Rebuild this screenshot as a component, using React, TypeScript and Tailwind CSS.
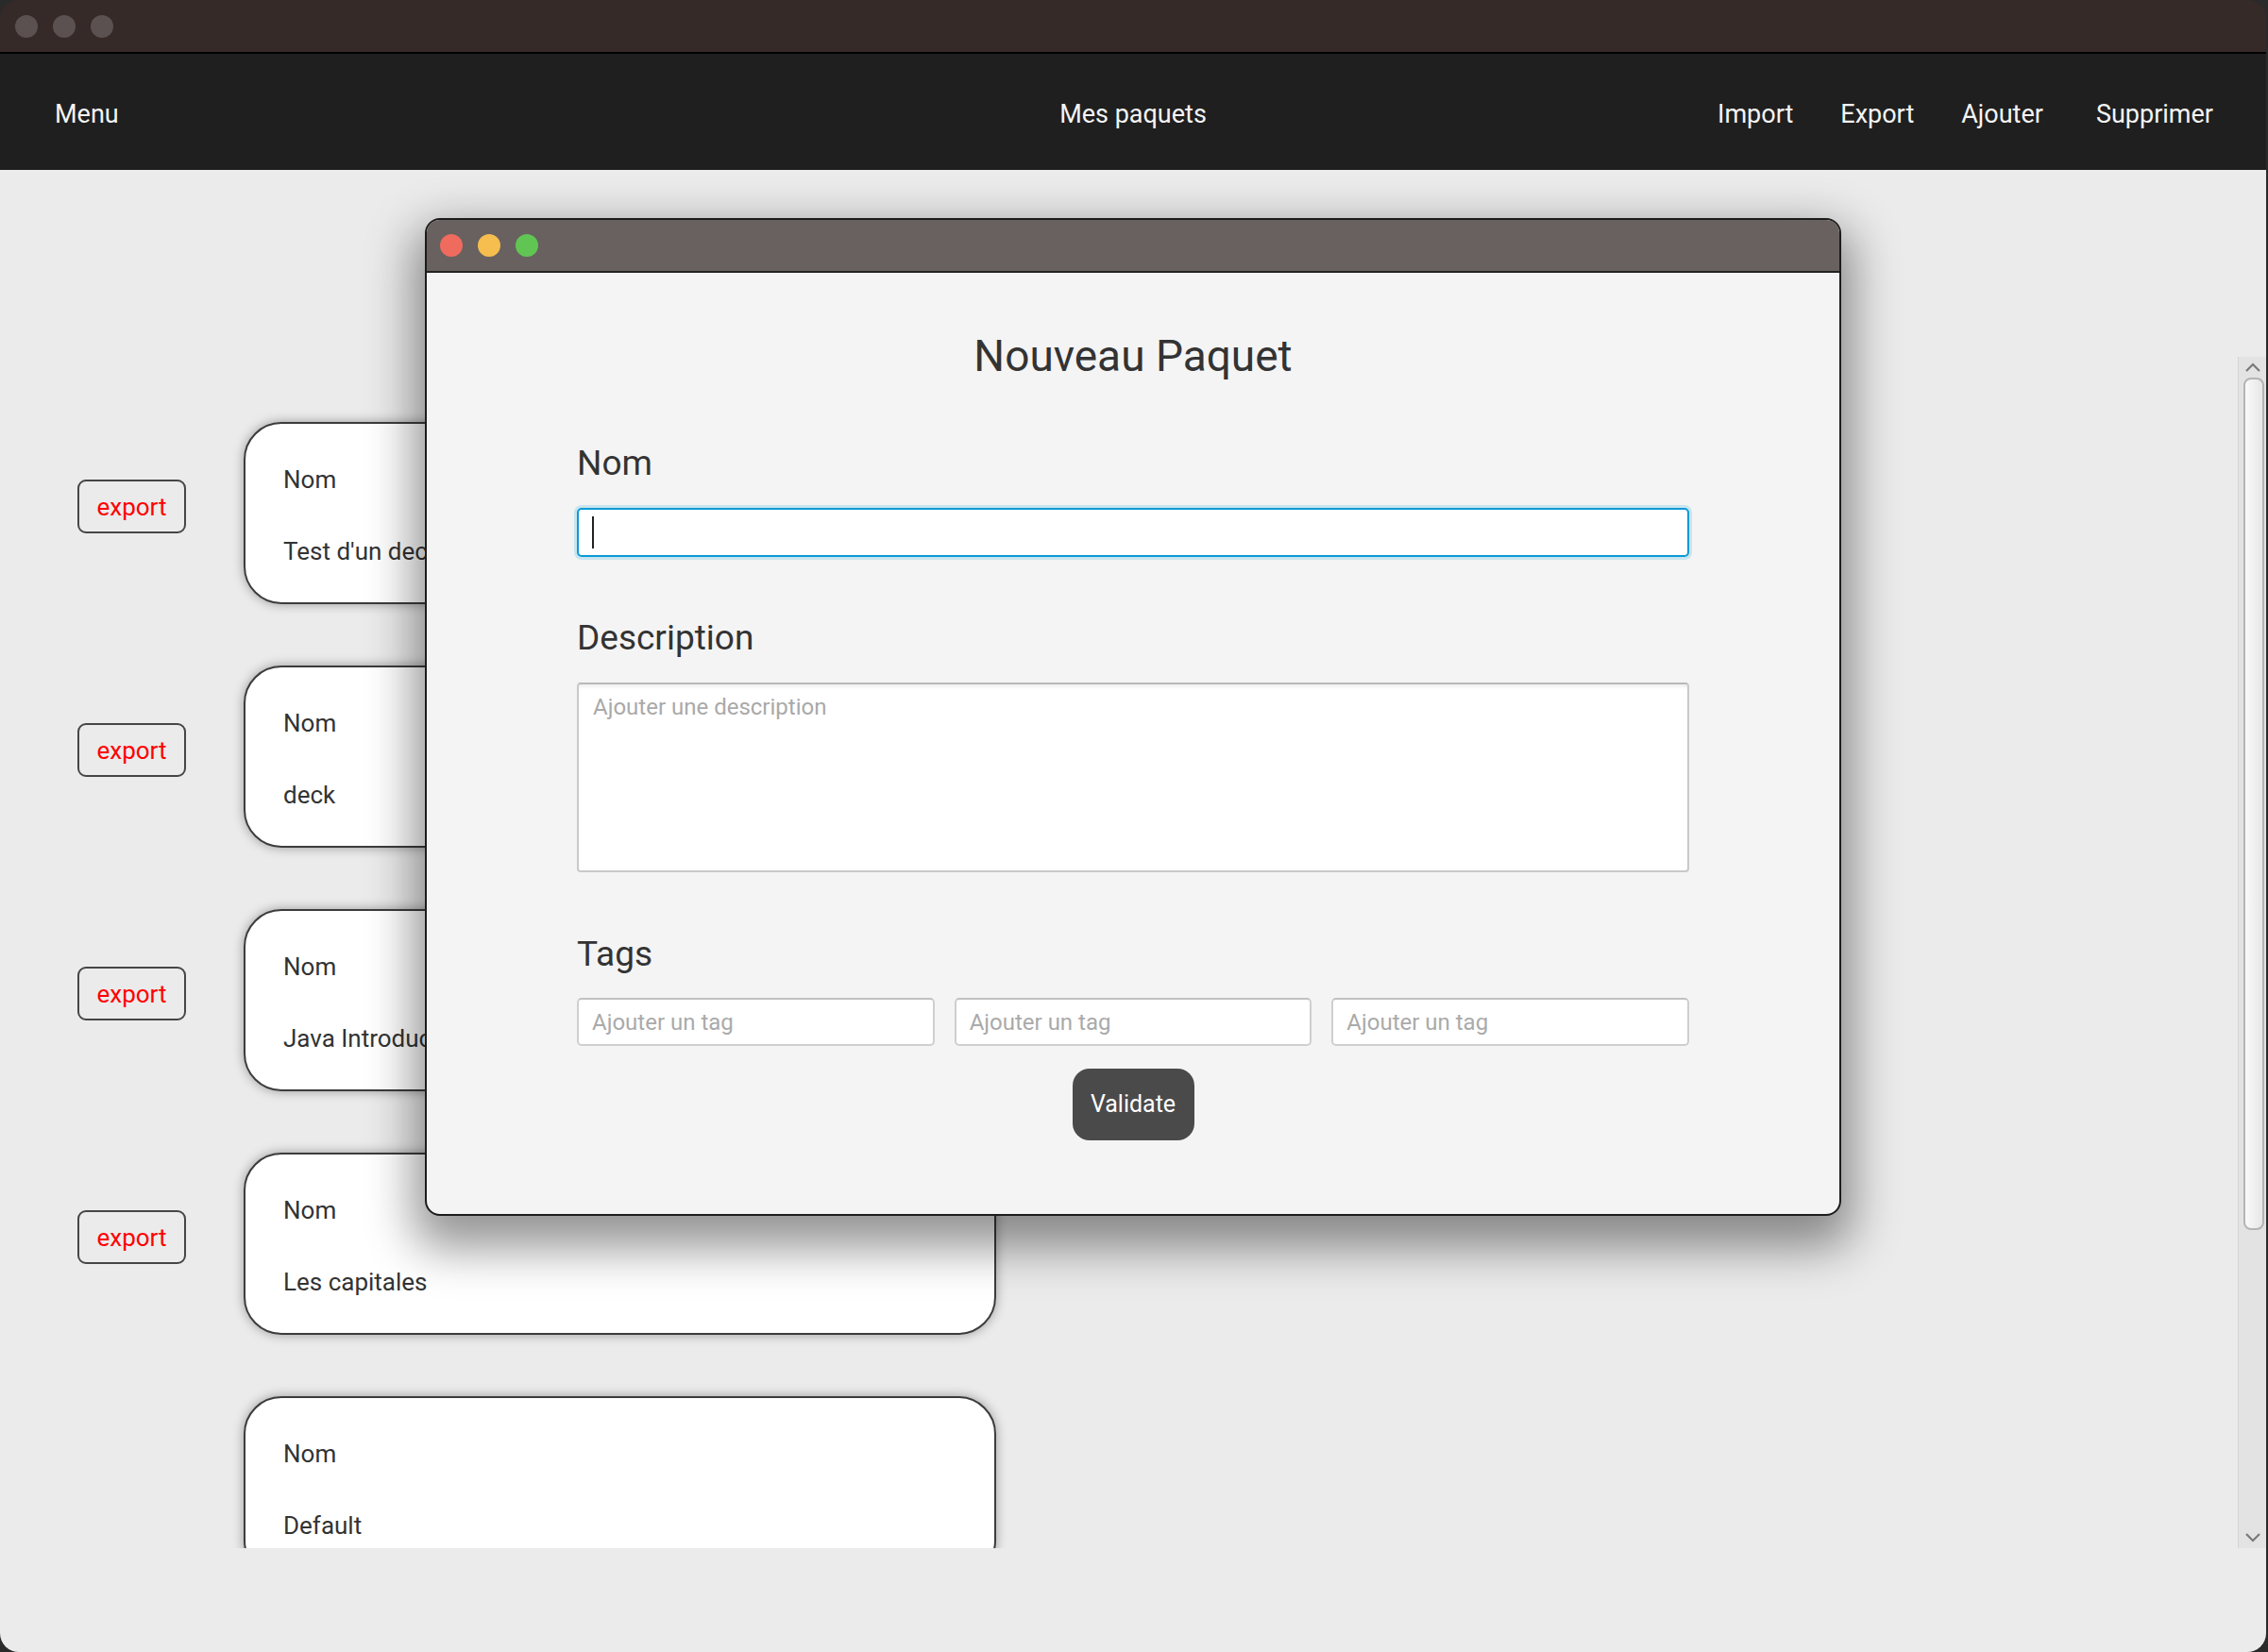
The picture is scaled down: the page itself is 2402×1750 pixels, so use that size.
import React from 'react';

const decks = [
  { name: "Test d'un deck", exportable: true },
  { name: 'deck', exportable: true },
  { name: 'Java Introduction', exportable: true },
  { name: 'Les capitales', exportable: true },
  { name: 'Default', exportable: false },
];

const font = { fontFamily: 'Roboto, "Noto Sans", sans-serif' };

const Chevron: React.FC<{ up?: boolean }> = ({ up }) => (
  <svg width="20" height="12" viewBox="0 0 20 12" className="block">
    <path
      d={up ? 'M3 10 L10 3 L17 10' : 'M3 2 L10 9 L17 2'}
      fill="none"
      stroke="#7a7a7a"
      strokeWidth="2.2"
    />
  </svg>
);

const DeckRow: React.FC<{ name: string; exportable: boolean }> = ({ name, exportable }) => (
  <div className="flex items-start h-[193px] shrink-0">
    <div className="w-[258px] pl-[82px] shrink-0">
      {exportable && (
        <button className="mt-[61px] w-[115px] h-[57px] rounded-[9px] border-2 border-[#464646] bg-transparent text-[26px] leading-[30px] text-[#ff0000]">
          export
        </button>
      )}
    </div>
    <div className="w-[797px] h-[193px] shrink-0 rounded-[40px] border-2 border-[#3c3c3c] bg-white shadow-[0_0_12px_rgba(0,0,0,0.35)] pl-[40px] pt-[44px] text-[26px] leading-[30px] text-[#333]">
      <div>Nom</div>
      <div className="mt-[46px] whitespace-nowrap">{name}</div>
    </div>
  </div>
);

const NewDeckDialog: React.FC = () => (
  <div className="absolute left-[450px] top-[51px] w-[1500px] h-[1057px] rounded-[16px] border-2 border-[#1c1c1c] bg-[#f4f4f4] overflow-hidden shadow-[0_22px_50px_12px_rgba(0,0,0,0.42)] flex flex-col">
    <div className="h-[56px] shrink-0 bg-[#686160] border-b-2 border-[#222] flex items-center pl-[14px] gap-[16px]">
      <span className="w-[24px] h-[24px] rounded-full bg-[#ee6b5e]" />
      <span className="w-[24px] h-[24px] rounded-full bg-[#f5be4f]" />
      <span className="w-[24px] h-[24px] rounded-full bg-[#61c554]" />
    </div>
    <div className="flex-1 flex flex-col px-[159px] pt-[62px]">
      <h1 className="text-center text-[46px] leading-[52px] font-normal text-[#333]">Nouveau Paquet</h1>

      <label className="mt-[66px] text-[37px] leading-[44px] text-[#333]">Nom</label>
      <div className="mt-[25px] h-[52px] rounded-[5px] border-2 border-[#0a9bd6] bg-white shadow-[0_0_0_3px_rgba(10,155,214,0.18)] flex items-center pl-[14px]">
        <span className="w-[2px] h-[34px] bg-[#222]" />
      </div>

      <label className="mt-[64px] text-[37px] leading-[44px] text-[#333]">Description</label>
      <div className="mt-[25px] h-[201px] rounded-[4px] border-2 border-[#c9c9c9] border-t-[#b9b9b9] bg-white shadow-[inset_0_4px_4px_-2px_rgba(0,0,0,0.08)] pl-[15px] pt-[10px] text-[24px] leading-[28px] text-[#a9a9a9]">
        Ajouter une description
      </div>

      <label className="mt-[65px] text-[37px] leading-[44px] text-[#333]">Tags</label>
      <div className="mt-[24px] grid grid-cols-3 gap-[21px]">
        {[0, 1, 2].map(i => (
          <div
            key={i}
            className="h-[51px] rounded-[5px] border-2 border-[#cfcfcf] border-t-[#c0c0c0] bg-white flex items-center pl-[14px] text-[24px] leading-[28px] text-[#aaaaaa]"
          >
            Ajouter un tag
          </div>
        ))}
      </div>

      <div className="mt-[24px] flex justify-center">
        <button className="w-[129px] h-[76px] rounded-[18px] bg-[#4a4a4a] text-white text-[25px] leading-[30px]">
          Validate
        </button>
      </div>
    </div>
  </div>
);

const App: React.FC = () => {
  return (
    <div className="w-[2402px] h-[1750px] bg-[#2a2a2a] overflow-hidden" style={font}>
      <div className="w-[2400px] h-[1750px] rounded-[20px] overflow-hidden flex flex-col">
        {/* window title bar */}
        <div className="h-[57px] shrink-0 bg-[#352a28] border-b-2 border-black flex items-center pl-[16px] gap-[16px]">
          <span className="w-[24px] h-[24px] rounded-full bg-[#5b5150]" />
          <span className="w-[24px] h-[24px] rounded-full bg-[#5b5150]" />
          <span className="w-[24px] h-[24px] rounded-full bg-[#5b5150]" />
        </div>

        {/* nav */}
        <nav className="h-[123px] shrink-0 bg-[#1f1f1f] grid grid-cols-3 items-center pt-[4px] text-[27px] leading-[32px] text-[#f4f4f4]">
          <div className="pl-[58px]">Menu</div>
          <div className="text-center">Mes paquets</div>
          <div className="flex justify-end gap-[50px] pr-[56px]">
            <span>Import</span>
            <span>Export</span>
            <span>Ajouter</span>
            <span className="ml-[6px]">Supprimer</span>
          </div>
        </nav>

        {/* content */}
        <div className="relative flex-1 min-h-0 bg-[#ebebeb] flex flex-col pt-[198px] pb-[110px]">
          <div className="flex-1 min-h-0 flex overflow-hidden">
            <div className="flex-1 min-h-0 flex flex-col gap-[65px] pt-[69px] overflow-hidden">
              {decks.map(d => (
                <DeckRow key={d.name} name={d.name} exportable={d.exportable} />
              ))}
            </div>
            <div className="w-[30px] shrink-0 bg-[#e3e3e3] border-l border-[#d4d4d4] flex flex-col items-center">
              <div className="h-[22px] flex items-center">
                <Chevron up />
              </div>
              <div className="ml-[2px] w-[22px] h-[903px] rounded-[8px] border-2 border-[#b4b4b4] bg-gradient-to-r from-[#fafafa] to-[#e6e6e6]" />
              <div className="flex-1" />
              <div className="h-[22px] flex items-center">
                <Chevron />
              </div>
            </div>
          </div>

          <NewDeckDialog />
        </div>
      </div>
    </div>
  );
};

export default App;
